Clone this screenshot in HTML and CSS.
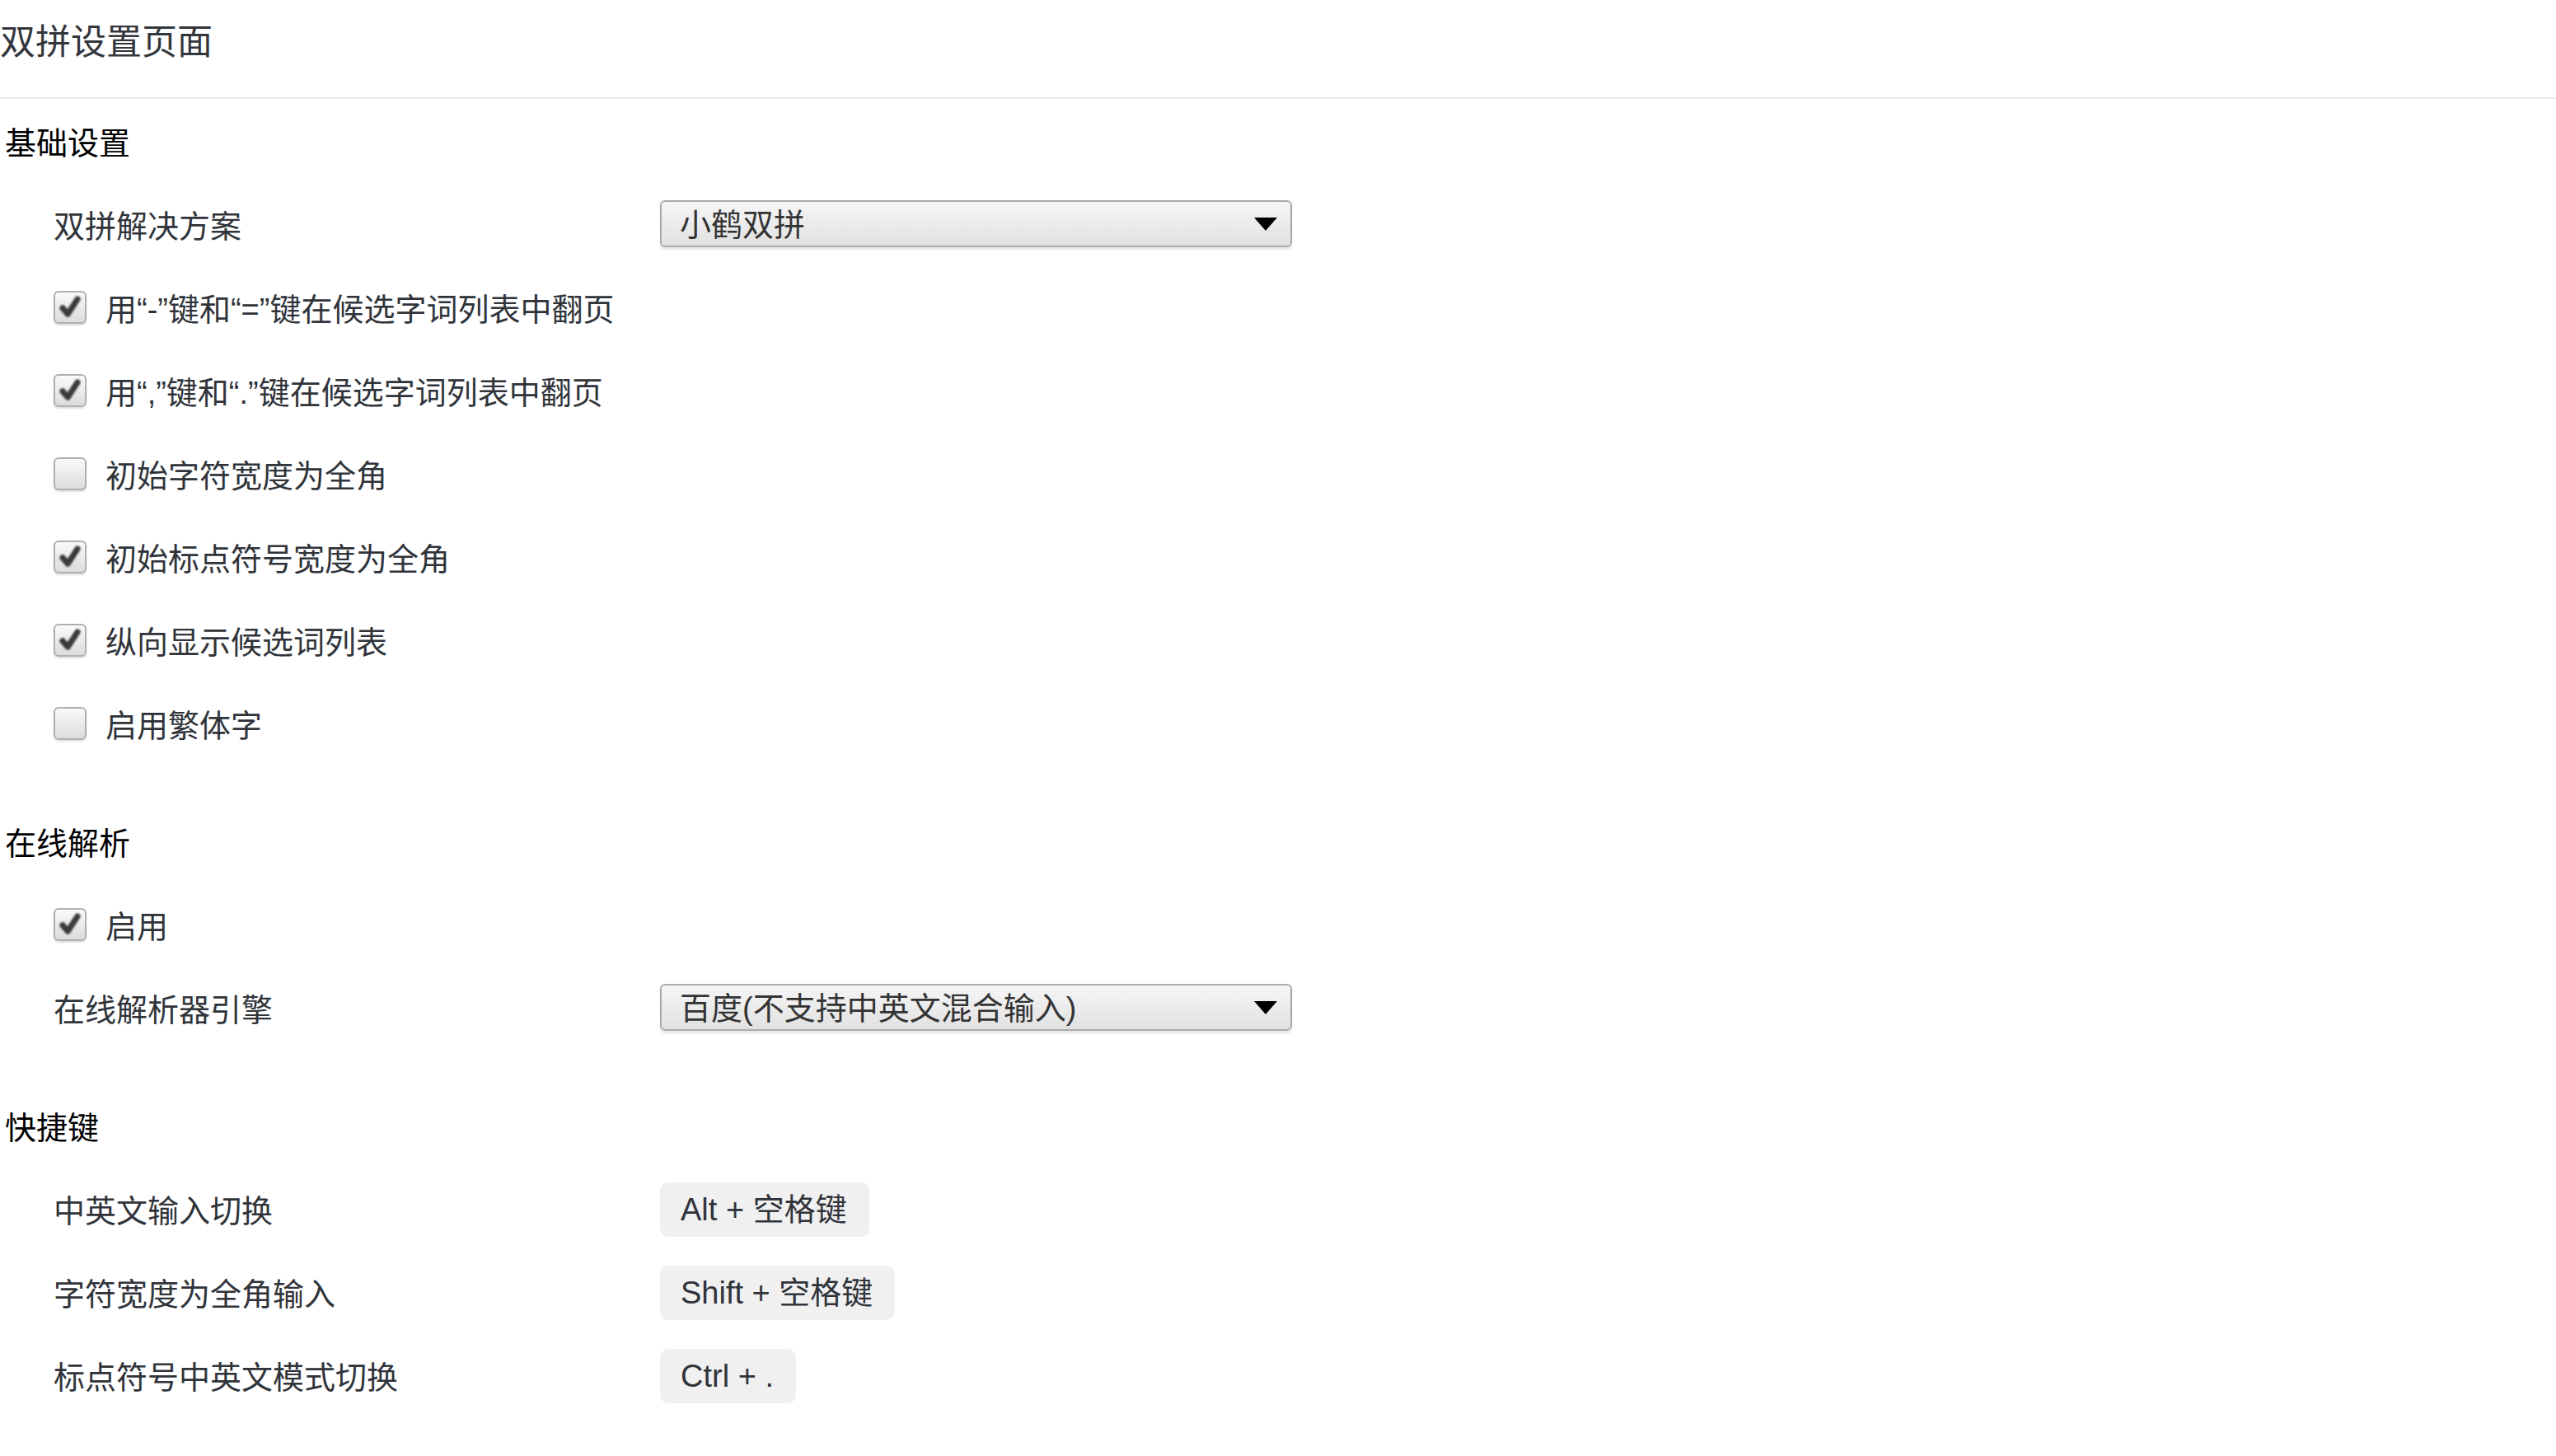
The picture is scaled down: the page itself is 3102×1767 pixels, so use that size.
FILE: index.html
```html
<!DOCTYPE html>
<html lang="zh-CN">
<head>
<meta charset="utf-8">
<title>双拼设置页面</title>
<link rel="stylesheet" href="styles.css">
</head>
<body>
<header class="page-header">
  <h1 class="page-title">双拼设置页面</h1>
</header>

<section class="group">
  <h2 class="group-title">基础设置</h2>
  <div class="row">
    <span class="label">双拼解决方案</span>
    <div class="select">
      <span class="select-value">小鹤双拼</span>
      <svg class="select-arrow" viewBox="0 0 28 16"><path d="M0 0H28L14 16Z"/></svg>
    </div>
  </div>
  <label class="row check">
    <span class="box on"><svg viewBox="0 0 40 40"><path d="M10 21 L17 29 L30 9"/></svg></span>
    <span class="check-text">用“-”键和“=”键在候选字词列表中翻页</span>
  </label>
  <label class="row check">
    <span class="box on"><svg viewBox="0 0 40 40"><path d="M10 21 L17 29 L30 9"/></svg></span>
    <span class="check-text">用“,”键和“.”键在候选字词列表中翻页</span>
  </label>
  <label class="row check">
    <span class="box"></span>
    <span class="check-text">初始字符宽度为全角</span>
  </label>
  <label class="row check">
    <span class="box on"><svg viewBox="0 0 40 40"><path d="M10 21 L17 29 L30 9"/></svg></span>
    <span class="check-text">初始标点符号宽度为全角</span>
  </label>
  <label class="row check">
    <span class="box on"><svg viewBox="0 0 40 40"><path d="M10 21 L17 29 L30 9"/></svg></span>
    <span class="check-text">纵向显示候选词列表</span>
  </label>
  <label class="row check">
    <span class="box"></span>
    <span class="check-text">启用繁体字</span>
  </label>
</section>

<section class="group">
  <h2 class="group-title">在线解析</h2>
  <label class="row check">
    <span class="box on"><svg viewBox="0 0 40 40"><path d="M10 21 L17 29 L30 9"/></svg></span>
    <span class="check-text">启用</span>
  </label>
  <div class="row">
    <span class="label">在线解析器引擎</span>
    <div class="select">
      <span class="select-value">百度(不支持中英文混合输入)</span>
      <svg class="select-arrow" viewBox="0 0 28 16"><path d="M0 0H28L14 16Z"/></svg>
    </div>
  </div>
</section>

<section class="group">
  <h2 class="group-title">快捷键</h2>
  <div class="row">
    <span class="label">中英文输入切换</span>
    <span class="kbd">Alt + 空格键</span>
  </div>
  <div class="row">
    <span class="label">字符宽度为全角输入</span>
    <span class="kbd">Shift + 空格键</span>
  </div>
  <div class="row">
    <span class="label">标点符号中英文模式切换</span>
    <span class="kbd">Ctrl + .</span>
  </div>
</section>
</body>
</html>
```

FILE: styles.css
```css
html, body {
  margin: 0;
  padding: 0;
  background: #ffffff;
}

body {
  font-family: "Liberation Sans", "Noto Sans CJK SC", sans-serif;
  font-size: 38px;
  color: #30343a;
}

/* page header with divider */
.page-header {
  padding: 0 0 16px 0;
  border-bottom: 2px solid #ebebeb;
}

.page-title {
  margin: 0;
  font-size: 43px;
  font-weight: normal;
  line-height: 102px;
  color: #33363b;
}

/* settings groups */
.group + .group {
  margin-top: 42px;
}

.group-title {
  margin: 0;
  padding-left: 6px;
  height: 101px;
  display: flex;
  align-items: center;
  font-size: 38px;
  font-weight: normal;
  color: #000;
}

.row {
  display: grid;
  grid-template-columns: 736px auto;
  align-items: center;
  justify-items: start;
  height: 101px;
  padding-left: 65px;
}

.row.check {
  display: flex;
  align-items: center;
  gap: 23px;
}

.label {
  white-space: nowrap;
}

/* checkbox */
.box {
  width: 40px;
  height: 40px;
  box-sizing: border-box;
  border: 2px solid #b0b0b0;
  border-radius: 6px;
  background: linear-gradient(#fafafa, #dcdcdc);
  box-shadow: 0 2px 2px rgba(0, 0, 0, 0.12);
  display: flex;
  align-items: center;
  justify-content: center;
  flex: none;
}

.box svg {
  width: 38px;
  height: 38px;
  fill: none;
  stroke: #3a3a3a;
  stroke-width: 8;
  stroke-linecap: round;
  stroke-linejoin: round;
  filter: blur(0.9px);
}

/* dropdown */
.select {
  width: 767px;
  height: 57px;
  box-sizing: border-box;
  border: 2px solid #acacac;
  border-radius: 6px;
  background: linear-gradient(#f6f6f6, #e1e1e1);
  box-shadow: 0 3px 3px rgba(0, 0, 0, 0.1);
  display: flex;
  align-items: center;
  justify-content: space-between;
  padding: 0 16px 4px 22px;
  color: #333;
}

.select-arrow {
  width: 28px;
  height: 16px;
  fill: #000;
  margin-top: 4px;
}

/* keyboard shortcut chip */
.kbd {
  background: #f0f0f1;
  border-radius: 10px;
  height: 66px;
  line-height: 66px;
  padding: 0 27px 0 25px;
  margin-top: 2px;
  color: #30343a;
  white-space: nowrap;
}
```
